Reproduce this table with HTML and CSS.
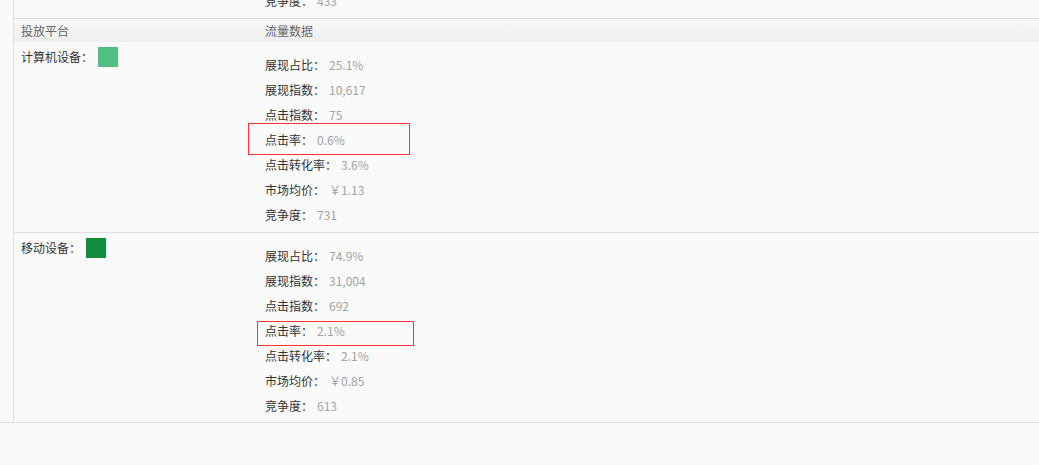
FILE: index.html
```html
<!DOCTYPE html>
<html lang="en">
<head>
    <meta charset="UTF-8">
    <meta name="viewport" content="width=device-width, initial-scale=1.0">
    <title>流量数据</title>
    <link rel="stylesheet" href="styles.css">
</head>
<body>
    <div class="wrap">
        <div class="table">
            <!-- previous row, only its last line is visible -->
            <div class="row row-cut">
                <div class="cell-platform"></div>
                <ul class="data-list">
                    <li><span class="label">竞争度：</span><span class="value">433</span></li>
                </ul>
            </div>
            <div class="row head">
                <div class="cell-platform">投放平台</div>
                <div class="cell-data">流量数据</div>
            </div>
            <div class="row">
                <div class="cell-platform">
                    <span>计算机设备：</span>
                    <span class="swatch pc"></span>
                </div>
                <ul class="data-list">
                    <li><span class="label">展现占比：</span><span class="value">25.1%</span></li>
                    <li><span class="label">展现指数：</span><span class="value">10,617</span></li>
                    <li><span class="label">点击指数：</span><span class="value">75</span></li>
                    <li class="marked"><span class="label">点击率：</span><span class="value">0.6%</span><i class="mark mark-pc"></i></li>
                    <li><span class="label">点击转化率：</span><span class="value">3.6%</span></li>
                    <li><span class="label">市场均价：</span><span class="value">￥1.13</span></li>
                    <li><span class="label">竞争度：</span><span class="value">731</span></li>
                </ul>
            </div>
            <div class="row last">
                <div class="cell-platform">
                    <span>移动设备：</span>
                    <span class="swatch mobile"></span>
                </div>
                <ul class="data-list">
                    <li><span class="label">展现占比：</span><span class="value">74.9%</span></li>
                    <li><span class="label">展现指数：</span><span class="value">31,004</span></li>
                    <li><span class="label">点击指数：</span><span class="value">692</span></li>
                    <li class="marked"><span class="label">点击率：</span><span class="value">2.1%</span><i class="mark mark-mobile"></i></li>
                    <li><span class="label">点击转化率：</span><span class="value">2.1%</span></li>
                    <li><span class="label">市场均价：</span><span class="value">￥0.85</span></li>
                    <li><span class="label">竞争度：</span><span class="value">613</span></li>
                </ul>
            </div>
        </div>
    </div>
</body>
</html>
```

FILE: styles.css
```css
body {
    margin: 0;
    background-color: #fafafa;
    font-family: "Noto Sans CJK SC", "Microsoft YaHei", sans-serif;
    font-size: 12px;
    color: #333;
    overflow: hidden;
}
.wrap {
    margin-top: -12px;
    border-bottom: 1px solid #dedede;
}
.table {
    margin-left: 13px;
    border-left: 1px solid #dedede;
}
.row {
    display: flex;
    border-bottom: 1px solid #dedede;
}
.row.head,
.row.last {
    border-bottom: none;
}
.cell-platform {
    width: 236px;
    padding: 5px 0 0 7px;
    display: flex;
    align-items: flex-start;
    gap: 5px;
}
.cell-platform span {
    line-height: 20px;
}
.head {
    height: 23px;
    background: linear-gradient(#f8f8f8, #eeeeee);
    color: #666;
}
.head .cell-platform,
.head .cell-data {
    padding-top: 0;
    line-height: 23px;
}
.head .cell-data {
    padding-left: 8px;
}
.swatch {
    display: inline-block;
    width: 20px;
    height: 20px;
}
.swatch.pc {
    background-color: #52bf83;
}
.swatch.mobile {
    background-color: #0f8c3e;
}
.data-list {
    list-style: none;
    margin: 0;
    padding: 10px 0 5px 8px;
}
.row-cut .data-list {
    padding-top: 0;
}
.row.last .data-list {
    padding-bottom: 4px;
}
.data-list li {
    position: relative;
    height: 25px;
    line-height: 25px;
}
.value {
    margin-left: 4px;
    color: #a3a3a3;
}
/* red annotation boxes */
.mark {
    position: absolute;
    border: 1px solid #ff3333;
}
.mark-pc {
    left: -17px;
    top: -4px;
    width: 160px;
    height: 30px;
}
.mark-mobile {
    left: -8px;
    top: 3px;
    width: 155px;
    height: 23px;
}
```
